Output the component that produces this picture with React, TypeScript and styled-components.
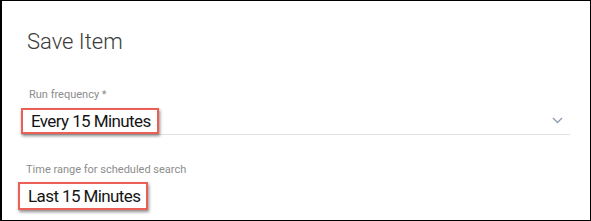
import styled, { createGlobalStyle } from "styled-components";

const GlobalStyle = createGlobalStyle`
  html, body {
    margin: 0;
    padding: 0;
    background: #fff;
  }
  body {
    font-family: Roboto, "Liberation Sans", Arial, sans-serif;
  }
`;

const Frame = styled.div`
  box-sizing: border-box;
  width: 591px;
  height: 221px;
  border: 1px solid #000;
  border-left-width: 2px;
  background: #fff;
  overflow: hidden;
  padding-top: 27px;
`;

const Title = styled.h1`
  margin: 0 0 0 25px;
  font-size: 22px;
  line-height: 28px;
  font-weight: 300;
  color: #3b3b3b;
`;

const Field = styled.div<{ $indent: number; $top: number; $gap: number }>`
  display: flex;
  flex-direction: column;
  gap: ${p => p.$gap}px;
  margin: ${p => p.$top}px 0 0 ${p => p.$indent}px;
`;

const Label = styled.label`
  display: block;
  margin-left: 8px;
  font-size: 11px;
  line-height: 14px;
  color: #8c8c8c;
  white-space: nowrap;
`;

const SelectRow = styled.div`
  display: flex;
  align-items: center;
  justify-content: space-between;
  width: 549px;
  height: 26px;
  border-bottom: 1px solid #e2e2e2;
`;

const ValueRow = styled.div`
  display: flex;
  align-items: center;
  height: 28px;
`;

const Highlight = styled.span<{ $height: number }>`
  display: inline-flex;
  align-items: center;
  box-sizing: border-box;
  height: ${p => p.$height}px;
  padding: 0 6px 0 8px;
  border: 2px solid #ec5f55;
  box-shadow: 1px 2px 3px rgba(0, 0, 0, 0.45);
  font-size: 17px;
  letter-spacing: -0.6px;
  color: #151515;
  white-space: nowrap;
  background: #fff;
`;

const Chevron = styled.svg`
  width: 11px;
  height: 7px;
  margin-right: 7px;
  margin-top: -2px;
`;

export default function App() {
  return (
    <>
      <GlobalStyle />
      <Frame>
        <Title>Save Item</Title>

        <Field $indent={19} $top={32} $gap={6}>
          <Label>Run frequency *</Label>
          <SelectRow>
            <Highlight $height={26}>Every 15 Minutes</Highlight>
            <Chevron viewBox="0 0 11 7">
              <path d="M1 1 L5.5 5.5 L10 1" fill="none" stroke="#8b9bb3" strokeWidth="1.3" />
            </Chevron>
          </SelectRow>
        </Field>

        <Field $indent={16} $top={28} $gap={5}>
          <Label>Time range for scheduled search</Label>
          <ValueRow>
            <Highlight $height={28}>Last 15 Minutes</Highlight>
          </ValueRow>
        </Field>
      </Frame>
    </>
  );
}
